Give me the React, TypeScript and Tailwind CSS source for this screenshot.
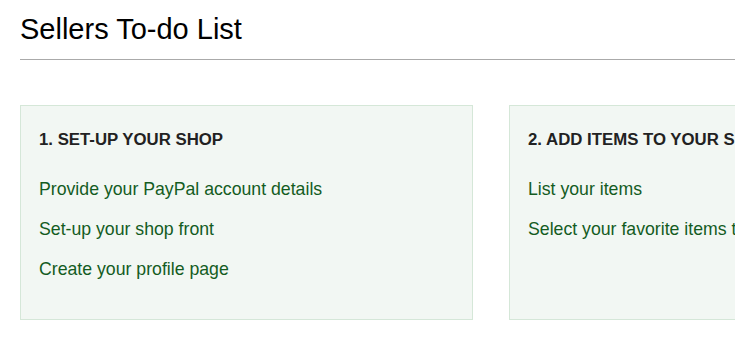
const steps = [
  {
    title: '1. SET-UP YOUR SHOP',
    tasks: [
      'Provide your PayPal account details',
      'Set-up your shop front',
      'Create your profile page',
    ],
  },
  {
    title: '2. ADD ITEMS TO YOUR SHOP',
    tasks: ['List your items', 'Select your favorite items to feature'],
  },
];

function StepCard({ title, tasks }: { title: string; tasks: string[] }) {
  return (
    <section className="h-[215px] w-[453px] shrink-0 border border-[#d5e7d8] bg-[#f2f7f3] px-[18px] pt-[24px]">
      <h2 className="text-[16.8px] leading-[20px] font-bold whitespace-nowrap text-[#222]">
        {title}
      </h2>
      <ul className="mt-[27px] flex flex-col gap-[16px]">
        {tasks.map((task) => (
          <li key={task} className="leading-[24px]">
            <a
              href="#"
              className="block text-[17.7px] leading-[24px] whitespace-nowrap text-[#145c1f]"
            >
              {task}
            </a>
          </li>
        ))}
      </ul>
    </section>
  );
}

export default function App() {
  return (
    <div className="h-[341px] w-[735px] overflow-hidden bg-white font-['Liberation_Sans',Arial,sans-serif]">
      {/* header */}
      <header className="ml-5 border-b border-[#aaa] pt-[13px] pb-[14px]">
        <h1 className="text-[29px] leading-[32px] text-black">
          Sellers To-do List
        </h1>
      </header>

      {/* to-do cards */}
      <div className="mt-[45px] ml-5 flex gap-[36px]">
        {steps.map((step) => (
          <StepCard key={step.title} title={step.title} tasks={step.tasks} />
        ))}
      </div>
    </div>
  );
}
